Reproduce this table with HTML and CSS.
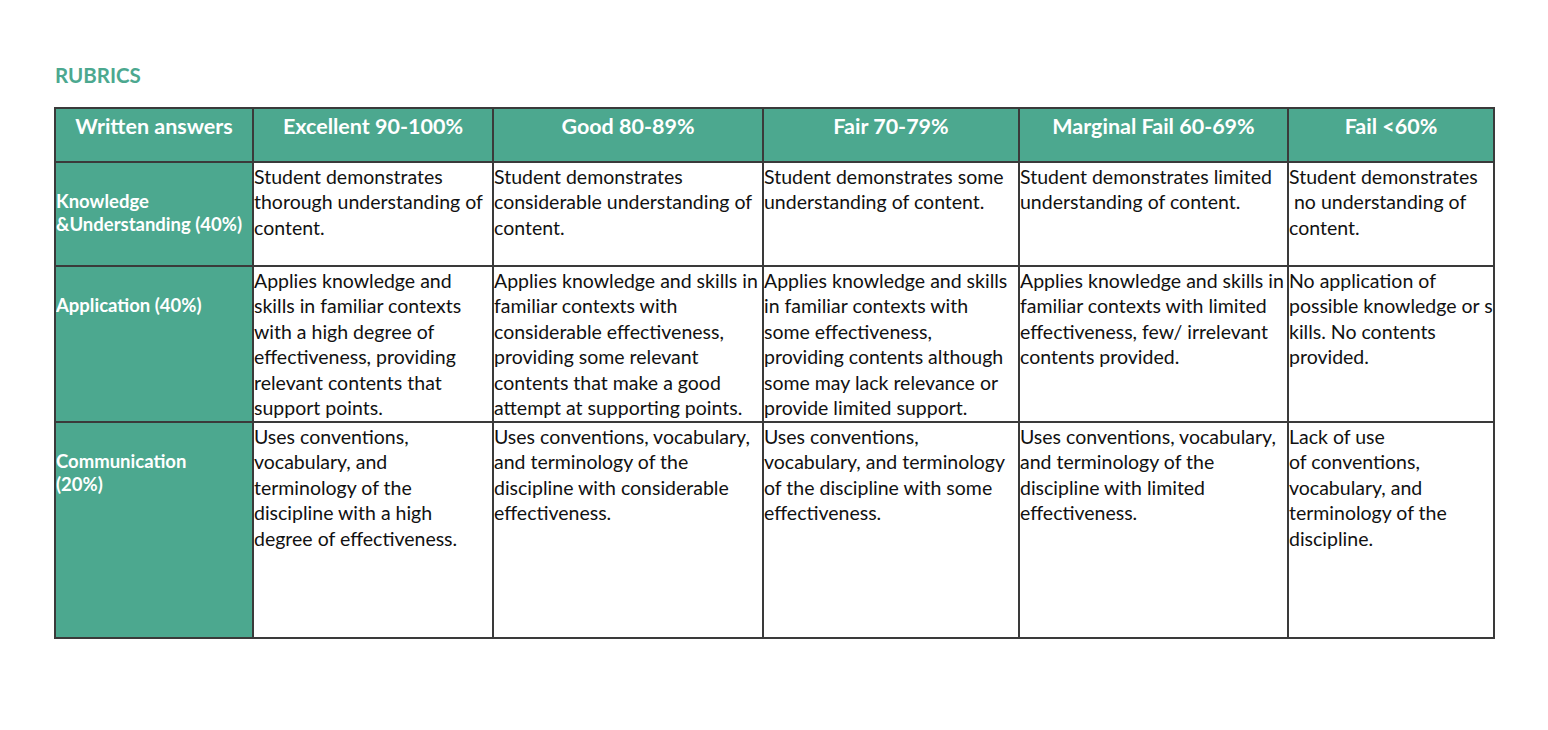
FILE: index.html
```html
<!DOCTYPE html>
<html lang="en">
<head>
<meta charset="utf-8">
<title>Rubrics</title>
<link rel="stylesheet" href="styles.css">
</head>
<body>
<main class="page">
  <h1 class="title">RUBRICS</h1>
  <table class="rubric">
    <colgroup>
      <col class="c1"><col class="c2"><col class="c3"><col class="c4"><col class="c5"><col class="c6">
    </colgroup>
    <thead>
      <tr class="head-row">
        <th>Written answers</th>
        <th>Excellent 90-100%</th>
        <th>Good 80-89%</th>
        <th>Fair 70-79%</th>
        <th>Marginal Fail 60-69%</th>
        <th>Fail &lt;60%</th>
      </tr>
    </thead>
    <tbody>
      <tr class="row-1">
        <th class="label">Knowledge<br>&amp;Understanding (40%)</th>
        <td>Student demonstrates<br>thorough understanding of<br>content.</td>
        <td>Student demonstrates<br>considerable understanding of<br>content.</td>
        <td>Student demonstrates some<br>understanding of content.</td>
        <td>Student demonstrates limited<br>understanding of content.</td>
        <td>Student demonstrates<br>&nbsp;no understanding of<br>content.</td>
      </tr>
      <tr class="row-2">
        <th class="label">Application (40%)</th>
        <td>Applies knowledge and<br>skills in familiar contexts<br>with a high degree of<br>effectiveness, providing<br>relevant contents that<br>support points.</td>
        <td>Applies knowledge and skills in<br>familiar contexts with<br>considerable effectiveness,<br>providing some relevant<br>contents that make a good<br>attempt at supporting points.</td>
        <td>Applies knowledge and skills<br>in familiar contexts with<br>some effectiveness,<br>providing contents although<br>some may lack relevance or<br>provide limited support.</td>
        <td>Applies knowledge and skills in<br>familiar contexts with limited<br>effectiveness, few/ irrelevant<br>contents provided.</td>
        <td>No application of<br>possible knowledge or s<br>kills. No contents<br>provided.</td>
      </tr>
      <tr class="row-3">
        <th class="label">Communication<br>(20%)</th>
        <td>Uses conventions,<br>vocabulary, and<br>terminology of the<br>discipline with a high<br>degree of effectiveness.</td>
        <td>Uses conventions, vocabulary,<br>and terminology of the<br>discipline with considerable<br>effectiveness.</td>
        <td>Uses conventions,<br>vocabulary, and terminology<br>of the discipline with some<br>effectiveness.</td>
        <td>Uses conventions, vocabulary,<br>and terminology of the<br>discipline with limited<br>effectiveness.</td>
        <td>Lack of use<br>of conventions,<br>vocabulary, and<br>terminology of the<br>discipline.</td>
      </tr>
    </tbody>
  </table>
</main>
</body>
</html>
```
FILE: styles.css
```css
html, body {
  margin: 0;
  padding: 0;
  background: #ffffff;
}

.page {
  padding: 63px 0 0 54px;
  font-family: Lato, "Open Sans", "Liberation Sans", sans-serif;
  color: #000;
}

.title {
  margin: 0 0 20px 1px;
  font-size: 20.5px;
  line-height: 24px;
  font-weight: 700;
  color: #4ca88f;
}

.rubric {
  border-collapse: collapse;
  table-layout: fixed;
  width: 1439px;
  border: 2px solid #333;
}

.c1 { width: 198px; }
.c2 { width: 240px; }
.c3 { width: 270px; }
.c4 { width: 256px; }
.c5 { width: 269px; }
.c6 { width: 206px; }

.rubric th,
.rubric td {
  border: 2px solid #3a3a3a;
  vertical-align: top;
  white-space: nowrap;
  overflow: hidden;
}

.head-row { height: 54px; }
.row-1 { height: 104px; }
.row-2 { height: 156px; }
.row-3 { height: 216px; }

.head-row th {
  background: #4ca88f;
  color: #fff;
  font-weight: 700;
  font-size: 21.5px;
  line-height: 26px;
  padding: 4px 4px 0;
  text-align: center;
}

.rubric .label {
  background: #4ca88f;
  color: #fff;
  font-weight: 700;
  font-size: 18.5px;
  line-height: 23px;
  text-align: left;
  padding: 27px 0 0 0;
}

.rubric td {
  font-size: 19.5px;
  line-height: 25.4px;
  padding: 1px 0 0 0;
  text-align: left;
  color: #111;
}
```
